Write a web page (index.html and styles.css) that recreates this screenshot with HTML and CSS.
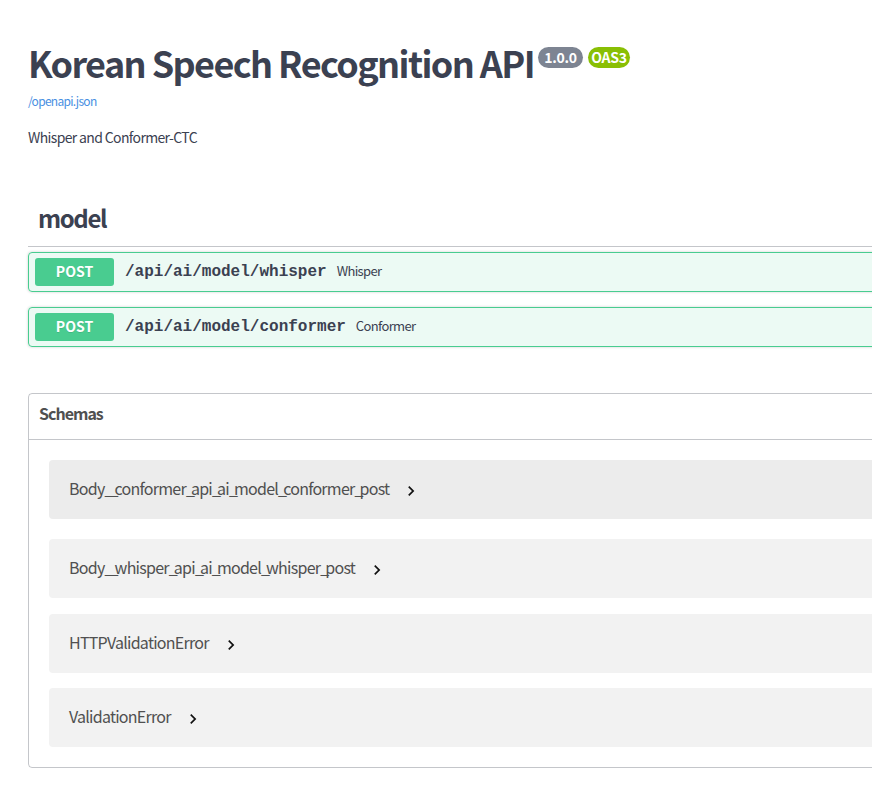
FILE: index.html
```html
<!DOCTYPE html>
<html lang="en">
<head>
<meta charset="utf-8">
<title>Korean Speech Recognition API</title>
<link rel="stylesheet" href="styles.css">
</head>
<body>
<div class="wrapper">
  <section class="info">
    <h2 class="title"><span class="title-text">Korean Speech Recognition API</span><span class="badge version">1.0.0</span><span class="badge oas">OAS3</span></h2>
    <a class="spec-link" href="#">/openapi.json</a>
    <p class="description">Whisper and Conformer-CTC</p>
  </section>

  <section class="tag-section">
    <h3 class="tag">model</h3>
    <div class="opblock">
      <span class="method">POST</span>
      <span class="path">/api/ai/model/whisper</span>
      <span class="summary">Whisper</span>
    </div>
    <div class="opblock">
      <span class="method">POST</span>
      <span class="path">/api/ai/model/conformer</span>
      <span class="summary">Conformer</span>
    </div>
  </section>

  <section class="models">
    <h4 class="models-title">Schemas</h4>
    <div class="models-body">
      <div class="model hovered">
        <span class="model-name">Body<span class="u">_</span><span class="u">_</span>conformer<span class="u">_</span>api<span class="u">_</span>ai<span class="u">_</span>model<span class="u">_</span>conformer<span class="u">_</span>post</span>
        <svg class="chevron" viewBox="0 0 24 24"><path d="M10 6L8.59 7.41 13.17 12l-4.58 4.59L10 18l6-6z"/></svg>
      </div>
      <div class="model gap-16">
        <span class="model-name">Body<span class="u">_</span><span class="u">_</span>whisper<span class="u">_</span>api<span class="u">_</span>ai<span class="u">_</span>model<span class="u">_</span>whisper<span class="u">_</span>post</span>
        <svg class="chevron" viewBox="0 0 24 24"><path d="M10 6L8.59 7.41 13.17 12l-4.58 4.59L10 18l6-6z"/></svg>
      </div>
      <div class="model gap-15">
        <span class="model-name">HTTPValidationError</span>
        <svg class="chevron" viewBox="0 0 24 24"><path d="M10 6L8.59 7.41 13.17 12l-4.58 4.59L10 18l6-6z"/></svg>
      </div>
      <div class="model last">
        <span class="model-name">ValidationError</span>
        <svg class="chevron" viewBox="0 0 24 24"><path d="M10 6L8.59 7.41 13.17 12l-4.58 4.59L10 18l6-6z"/></svg>
      </div>
    </div>
  </section>
</div>
</body>
</html>
```

FILE: styles.css
```css
html, body {
  overflow-x: hidden;
}
body {
  margin: 8px;
  background: #fff;
  color: #3b4151;
  font-family: "Noto Sans CJK KR", "Noto Sans", sans-serif;
}
.wrapper {
  width: 1100px;
  padding: 0 20px;
}
.info {
  padding-top: 32px;
}
.title {
  display: flex;
  align-items: flex-start;
  margin: 0;
  font-size: 36px;
  line-height: 44px;
  font-weight: 700;
  color: #3b4151;
  white-space: nowrap;
}
.title-text {
  letter-spacing: -1.6px;
}
.badge {
  display: inline-block;
  margin-top: 7px;
  height: 21px;
  line-height: 21px;
  border-radius: 57px;
  font-size: 14px;
  font-weight: 700;
  text-align: center;
  letter-spacing: -0.3px;
  color: #fff;
}
.version {
  width: 45px;
  background: #7d8492;
  margin-left: 4px;
}
.oas {
  width: 42px;
  background: #89bf04;
  margin-left: 5px;
}
.spec-link {
  display: block;
  margin-top: 9px;
  font-size: 12px;
  line-height: 16px;
  letter-spacing: -0.7px;
  color: #4990e2;
  text-decoration: none;
}
.description {
  margin: 18px 0 0;
  font-size: 14px;
  line-height: 20px;
  letter-spacing: -0.64px;
}
.tag-section {
  margin-top: 47px;
}
.tag {
  margin: 0 0 5px;
  padding: 8px 20px 12px 10px;
  font-size: 24px;
  line-height: 32px;
  font-weight: 700;
  letter-spacing: -1.4px;
  border-bottom: 1px solid rgba(59, 65, 81, 0.3);
}
.opblock {
  display: flex;
  align-items: center;
  margin-bottom: 15px;
  padding: 5px 6px;
  border: 1px solid #49cc90;
  border-radius: 4px;
  background: rgba(73, 204, 144, 0.1);
  box-shadow: 0 0 3px rgba(0, 0, 0, 0.19);
}
.method {
  width: 79px;
  height: 28px;
  line-height: 26px;
  text-align: center;
  border-radius: 3px;
  background: #49cc90;
  color: #fff;
  font-size: 14px;
  font-weight: 700;
  text-shadow: 0 1px 0 rgba(0, 0, 0, 0.1);
}
.path {
  padding: 0 10px 0 11px;
  font-family: "Liberation Mono", monospace;
  font-size: 16px;
  font-weight: 700;
  line-height: 28px;
  color: #3b4151;
}
.summary {
  font-size: 13px;
  color: #3b4151;
  line-height: 28px;
  margin-top: -2px;
  letter-spacing: -0.65px;
}
.models {
  margin-top: 46px;
  border: 1px solid rgba(59, 65, 81, 0.3);
  border-radius: 4px;
}
.models-title {
  margin: 0;
  padding: 7px 20px 14px 10px;
  font-size: 16px;
  line-height: 24px;
  font-weight: 700;
  letter-spacing: -1px;
  color: #505050;
  border-bottom: 1px solid rgba(59, 65, 81, 0.3);
}
.models-body {
  padding: 20px;
}
.model {
  display: flex;
  align-items: center;
  height: 59px;
  padding: 0 20px;
  margin-bottom: 20px;
  border-radius: 4px;
  background: #f2f2f2;
}
.model.hovered {
  background: #ececec;
}
.model.gap-16 {
  margin-bottom: 16px;
}
.model.gap-15 {
  margin-bottom: 15px;
}
.model.last {
  margin-bottom: 0;
}
.model-name {
  margin-bottom: 3px;
  font-size: 16px;
  line-height: 24px;
  letter-spacing: -0.75px;
  color: #505050;
}
.model-name .u {
  letter-spacing: -3.9px;
}
.chevron {
  width: 20px;
  height: 20px;
  margin-left: 12px;
  margin-top: 2px;
  fill: #111;
}
```
